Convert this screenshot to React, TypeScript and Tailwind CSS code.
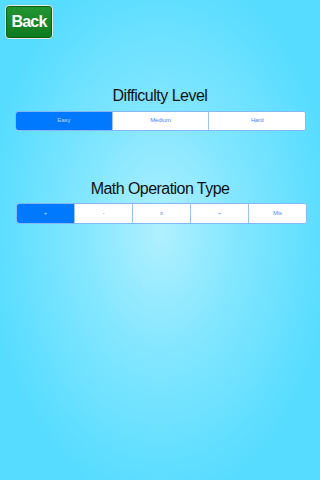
import React from "react";

const font = { fontFamily: '"Liberation Sans", Arial, Helvetica, sans-serif' };

function Segmented({ items, selected, className }: { items: string[]; selected: number; className: string }) {
  return (
    <div className={`flex h-[20.5px] w-[291px] overflow-hidden rounded-[3px] border border-[#86b6f6] bg-white ${className}`}>
      {items.map((it, i) => (
        <div
          key={i}
          className={`flex flex-1 items-center justify-center text-[6px] tracking-[-0.1px] ${
            i > 0 ? "border-l border-[#9cc3f7]" : ""
          } ${i === selected ? "bg-[#0079ff] text-[#b9d6fd]" : "bg-white text-[#3b8ef8]"}`}
        >
          {it}
        </div>
      ))}
    </div>
  );
}

export default function App() {
  return (
    <div
      style={font}
      className="flex h-[480px] w-[320px] flex-col bg-[radial-gradient(ellipse_175px_270px_at_160px_232px,#b0f0ff_0%,#82e6ff_45%,#56dcff_100%)]"
    >
      <div className="pl-[5px] pt-[5px]">
        <div className="flex h-[34px] w-[48px] items-center justify-center rounded-[4px] border-[1.5px] border-[#e6eee6] bg-[linear-gradient(#239632,#0d7a1f)] shadow-[inset_0_0_0_1px_#0a5e16,0_0_1px_#7aa]">
          <span className="text-[16px] font-bold tracking-[-0.8px] text-white">Back</span>
        </div>
      </div>
      <div className="mt-[47px] h-[20px] text-center text-[16px] leading-[20px] tracking-[-0.5px] text-[#111]">
        Difficulty Level
      </div>
      <Segmented className="ml-[15px] mt-[4.5px]" items={["Easy", "Medium", "Hard"]} selected={0} />
      <div className="mt-[48px] h-[20px] text-center text-[16px] leading-[20px] tracking-[-0.55px] text-[#111]">
        Math Operation Type
      </div>
      <Segmented className="ml-[16px] mt-[4px]" items={["+", "-", "x", "÷", "Mix"]} selected={0} />
    </div>
  );
}
